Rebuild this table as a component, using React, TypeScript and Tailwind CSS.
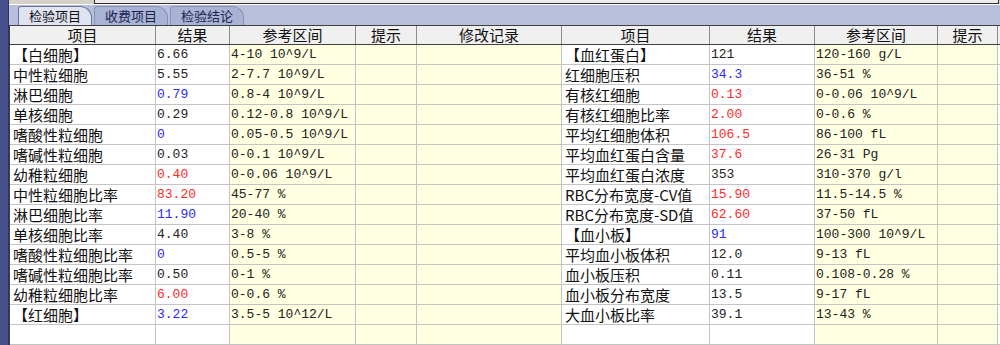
import React from "react";

type Row = { name: string; value: string; tone?: "red" | "blue"; range: string };

const leftRows: Row[] = [
  { name: "【白细胞】", value: "6.66", range: "4-10 10^9/L" },
  { name: "中性粒细胞", value: "5.55", range: "2-7.7 10^9/L" },
  { name: "淋巴细胞", value: "0.79", tone: "blue", range: "0.8-4 10^9/L" },
  { name: "单核细胞", value: "0.29", range: "0.12-0.8 10^9/L" },
  { name: "嗜酸性粒细胞", value: "0", tone: "blue", range: "0.05-0.5 10^9/L" },
  { name: "嗜碱性粒细胞", value: "0.03", range: "0-0.1 10^9/L" },
  { name: "幼稚粒细胞", value: "0.40", tone: "red", range: "0-0.06 10^9/L" },
  { name: "中性粒细胞比率", value: "83.20", tone: "red", range: "45-77 %" },
  { name: "淋巴细胞比率", value: "11.90", tone: "blue", range: "20-40 %" },
  { name: "单核细胞比率", value: "4.40", range: "3-8 %" },
  { name: "嗜酸性粒细胞比率", value: "0", tone: "blue", range: "0.5-5 %" },
  { name: "嗜碱性粒细胞比率", value: "0.50", range: "0-1 %" },
  { name: "幼稚粒细胞比率", value: "6.00", tone: "red", range: "0-0.6 %" },
  { name: "【红细胞】", value: "3.22", tone: "blue", range: "3.5-5 10^12/L" },
];

const rightRows: Row[] = [
  { name: "【血红蛋白】", value: "121", range: "120-160 g/L" },
  { name: "红细胞压积", value: "34.3", tone: "blue", range: "36-51 %" },
  { name: "有核红细胞", value: "0.13", tone: "red", range: "0-0.06 10^9/L" },
  { name: "有核红细胞比率", value: "2.00", tone: "red", range: "0-0.6 %" },
  { name: "平均红细胞体积", value: "106.5", tone: "red", range: "86-100 fL" },
  { name: "平均血红蛋白含量", value: "37.6", tone: "red", range: "26-31 Pg" },
  { name: "平均血红蛋白浓度", value: "353", range: "310-370 g/l" },
  { name: "RBC分布宽度-CV值", value: "15.90", tone: "red", range: "11.5-14.5 %" },
  { name: "RBC分布宽度-SD值", value: "62.60", tone: "red", range: "37-50 fL" },
  { name: "【血小板】", value: "91", tone: "blue", range: "100-300 10^9/L" },
  { name: "平均血小板体积", value: "12.0", range: "9-13 fL" },
  { name: "血小板压积", value: "0.11", range: "0.108-0.28 %" },
  { name: "血小板分布宽度", value: "13.5", range: "9-17 fL" },
  { name: "大血小板比率", value: "39.1", range: "13-43 %" },
];

const toneClass = (t?: "red" | "blue") =>
  t === "red" ? "text-[#ff2a2a]" : t === "blue" ? "text-[#2a2aff]" : "text-[#222]";

const cjk = "font-['Noto_Sans_CJK_SC',sans-serif]";
const mono = "font-['Liberation_Mono','Noto_Sans_CJK_SC',monospace]";

function Tab({ label, active }: { label: string; active?: boolean }) {
  return (
    <div
      className={`h-[19px] px-[10px] flex items-center border border-b-0 rounded-tl-[3px] rounded-tr-[12px] text-[13px] leading-[15px] ${cjk} ${
        active
          ? "bg-[#dfe4f1] border-[#6a7398] text-[#111]"
          : "bg-[#a9b3d4] border-[#8892b8] text-[#1b2450] mt-[1px]"
      }`}
    >
      {label}
    </div>
  );
}

function HeadCell({ w, label }: { w: string; label: string }) {
  return (
    <div className={`${w} h-full shrink-0 border-r border-[#8c8c8c] flex items-center justify-center text-[15px] leading-[17px] text-[#111] ${cjk}`}>
      {label}
    </div>
  );
}

function Cell({ w, yellow, children, className = "" }: { w: string; yellow?: boolean; children?: React.ReactNode; className?: string }) {
  return (
    <div
      className={`${w} h-full shrink-0 border-r border-[#c4c4c4] flex items-center whitespace-nowrap leading-[17px] ${
        yellow ? "bg-[#ffffe1]" : "bg-white"
      } ${className}`}
    >
      {children}
    </div>
  );
}

export default function App() {
  const rows = Array.from({ length: 15 }, (_, i) => ({ l: leftRows[i], r: rightRows[i] }));

  return (
    <div className="w-[1000px] h-[345px] overflow-hidden flex bg-[#d4d0c8]">
      {/* left frame strip */}
      <div className="w-[9px] h-full bg-[#46508a] border-r border-[#2c3462]" />

      <div className="flex-1 flex flex-col min-w-0">
        {/* top edit box edge */}
        <div className="h-[4px] flex bg-[#d4d0c8]">
          <div className="w-[85px]" />
          <div className="w-[905px] border-l border-r border-b border-[#303030] bg-[#ececec]" />
        </div>

        {/* tab strip */}
        <div className="h-[21px] bg-[#b7bfdb] border-t border-white flex items-end gap-[2px] pl-[9px]">
          <Tab label="检验项目" active />
          <Tab label="收费项目" />
          <Tab label="检验结论" />
        </div>

        {/* grid header */}
        <div className="h-[21px] flex bg-[#f0f0f0] border-t border-b border-[#404040] border-l">
          <HeadCell w="w-[146px]" label="项目" />
          <HeadCell w="w-[74px]" label="结果" />
          <HeadCell w="w-[126px]" label="参考区间" />
          <HeadCell w="w-[61px]" label="提示" />
          <HeadCell w="w-[145px]" label="修改记录" />
          <HeadCell w="w-[148px]" label="项目" />
          <HeadCell w="w-[105px]" label="结果" />
          <HeadCell w="w-[123px]" label="参考区间" />
          <HeadCell w="w-[60px]" label="提示" />
        </div>

        {/* grid body */}
        <div className="flex flex-col border-l border-[#404040]">
          {rows.map(({ l, r }, i) => (
            <div key={i} className="h-[20px] flex border-b border-[#c4c4c4] bg-white">
              <Cell w="w-[146px]" className={`pl-[3px] text-[15px] text-[#111] ${cjk}`}>{l?.name}</Cell>
              <Cell w="w-[74px]" className={`pl-[1px] text-[13px] ${mono} ${toneClass(l?.tone)}`}>{l?.value}</Cell>
              <Cell w="w-[126px]" yellow className={`pl-[1px] text-[13px] text-[#222] ${mono}`}>{l?.range}</Cell>
              <Cell w="w-[61px]" yellow />
              <Cell w="w-[145px]" yellow />
              <Cell w="w-[148px]" className={`pl-[3px] text-[15px] text-[#111] ${cjk}`}>{r?.name}</Cell>
              <Cell w="w-[105px]" className={`pl-[1px] text-[13px] ${mono} ${toneClass(r?.tone)}`}>{r?.value}</Cell>
              <Cell w="w-[123px]" yellow className={`pl-[1px] text-[13px] text-[#222] ${mono}`}>{r?.range}</Cell>
              <Cell w="w-[60px]" yellow />
            </div>
          ))}
        </div>
      </div>
    </div>
  );
}
